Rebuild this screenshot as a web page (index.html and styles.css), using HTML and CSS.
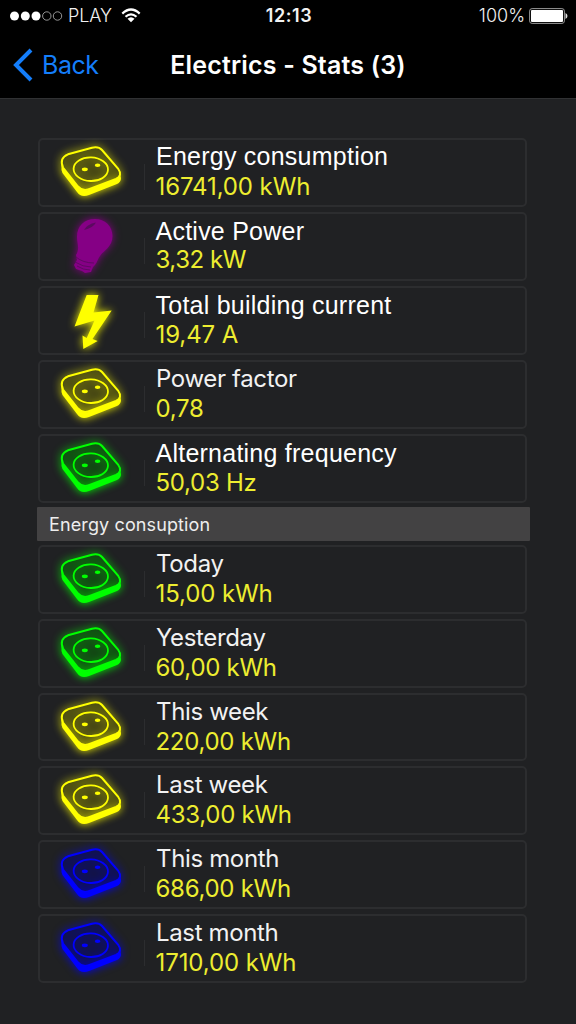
FILE: index.html
```html
<!DOCTYPE html>
<html lang="en">
<head>
<meta charset="utf-8">
<title>Electrics - Stats</title>
<link rel="stylesheet" href="styles.css">
</head>
<body>
<svg class="defs" width="0" height="0">
  <symbol id="socket" viewBox="0 0 100 69">
    <path class="side" d="M21.5 24L21.5 31Q22 34 24 36L37 53Q41 59 49 56L77 45Q81 43 81 39L80 35Q79 39 76 40L51 50Q43 54 38 48L23 29Z"/>
    <path class="face" d="M28 15.3L52 8.8Q58.500 7.300 62 11L78 29.500Q83 36.500 76 40L51 49.500Q43 53.500 38 47.500L23 28.500Q19 19 28 15.300Z"/>
    <ellipse class="line" cx="50.800" cy="30.200" rx="17.200" ry="11.800" transform="rotate(2 50.800 30)"/>
    <ellipse class="eye" cx="44.800" cy="30.300" rx="3" ry="1.900"/>
    <ellipse class="eye" cx="57.600" cy="26.300" rx="2.800" ry="1.800"/>
  </symbol>
  <symbol id="bulb" viewBox="0 1 100 69">
    <path class="solid" d="M55 7C65 7 72.500 14 72.500 24C72.500 35 64 38 60 44C57 48 57 52 53 55L51 60L45 61L42 59L36 57L34 53L37 48L36 43C40 37 37 31 37 25C37 14 44 7 55 7Z"/>
    <path class="dent" d="M44 18Q47 12 56 10.500Q53 16 44 18Z"/>
    <path class="thread" d="M36 45Q43 51 54 51M35 50Q43 55 51 55M37 54Q43 58 50 58"/>
  </symbol>
  <symbol id="bolt" viewBox="0 1 100 69">
    <path class="solid" d="M46.700 9H58.500L53.500 26.500L71.700 24.500L52.500 53L57.700 55L43.300 63L42.500 49.500L46.700 52L54.500 34.500L34.500 40.500Z"/>
  </symbol>
</svg>
<header class="top">
  <div class="status">
    <div class="carrier">
      <svg width="53" height="12" viewBox="0 0 53 12"><g fill="#fff"><circle cx="4.500" cy="6" r="4.500"/><circle cx="15.300" cy="6" r="4.500"/><circle cx="26" cy="6" r="4.500"/></g><g fill="none" stroke="#bbb" stroke-width=".8"><circle cx="36.800" cy="6" r="4.200"/><circle cx="47.500" cy="6" r="4.200"/></g></svg>
      <span class="operator">PLAY</span>
      <svg class="wifi" width="20" height="15" viewBox="0 0 20 15" fill="none" stroke="#fff" stroke-width="2.200"><path d="M1.300 5.600Q10-2.600 18.700 5.600M4.500 8.800Q10 3.800 15.500 8.800"/><path fill="#fff" stroke="none" d="M6.500 10.800Q10 7.800 13.500 10.800L10 14.300Z"/></svg>
    </div>
    <span class="clock">12:13</span>
    <div class="power"><span class="percent">100%</span>
      <svg width="39" height="16" viewBox="0 0 39 16"><rect x=".6" y=".6" width="34.800" height="14.800" rx="2.500" fill="none" stroke="#999"/><rect x="2" y="2" width="32" height="12" rx="1" fill="#fff"/><path d="M36.500 5Q38.500 6 38.500 8T36.500 11Z" fill="#ddd"/></svg>
    </div>
  </div>
  <nav class="nav">
    <a class="back"><svg width="20" height="34" viewBox="0 0 20 34"><path d="M18 2L3 17L18 32" fill="none" stroke="#147efb" stroke-width="4"/></svg><span class="back-label">Back</span></a>
    <h1 class="title">Electrics - Stats (3)</h1>
  </nav>
</header>
<main class="list">
  <section class="group">
    <article class="card"><svg class="icon yellow"><use href="#socket"/></svg><div class="info"><span class="name plain">Energy consumption</span><span class="value wide">16741,00 kWh</span></div></article>
    <article class="card"><svg class="icon purple"><use href="#bulb"/></svg><div class="info"><span class="name plain low">Active Power</span><span class="value raised">3,32 kW</span></div></article>
    <article class="card"><svg class="icon yellow"><use href="#bolt"/></svg><div class="info"><span class="name plain low">Total building current</span><span class="value wide">19,47 A</span></div></article>
    <article class="card"><svg class="icon yellow"><use href="#socket"/></svg><div class="info"><span class="name">Power factor</span><span class="value">0,78</span></div></article>
    <article class="card"><svg class="icon green"><use href="#socket"/></svg><div class="info"><span class="name plain low">Alternating frequency</span><span class="value">50,03 Hz</span></div></article>
  </section>
  <h2 class="heading">Energy consuption</h2>
  <section class="group energy">
    <article class="card"><svg class="icon green"><use href="#socket"/></svg><div class="info"><span class="name">Today</span><span class="value wide">15,00 kWh</span></div></article>
    <article class="card"><svg class="icon green"><use href="#socket"/></svg><div class="info"><span class="name">Yesterday</span><span class="value">60,00 kWh</span></div></article>
    <article class="card"><svg class="icon yellow"><use href="#socket"/></svg><div class="info"><span class="name">This week</span><span class="value">220,00 kWh</span></div></article>
    <article class="card"><svg class="icon yellow"><use href="#socket"/></svg><div class="info"><span class="name">Last week</span><span class="value">433,00 kWh</span></div></article>
    <article class="card"><svg class="icon blue"><use href="#socket"/></svg><div class="info"><span class="name">This month</span><span class="value">686,00 kWh</span></div></article>
    <article class="card"><svg class="icon blue"><use href="#socket"/></svg><div class="info"><span class="name">Last month</span><span class="value wide">1710,00 kWh</span></div></article>
  </section>
</main>
</body>
</html>
```
FILE: styles.css
```css
* { box-sizing: border-box; }
body { margin: 0; height: 1024px; background: #202123; color: #f2f2f2; font-family: Inter, "Liberation Sans", sans-serif; overflow: hidden; }
.defs { display: block; position: absolute; }
.top { height: 99px; background: #000; border-bottom: 1px solid #303133; }
.status { height: 32px; display: grid; grid-template-columns: 1fr auto 1fr; align-items: center; padding: 0 8px 0 10px; font-size: 18px; line-height: 32px; }
.carrier, .power { display: flex; align-items: center; }
.operator { margin-left: 5px; font-weight: 300; letter-spacing: -.1px; }
.wifi { margin: -2px 0 0 9px; }
.clock { font-weight: 600; font-size: 18px; letter-spacing: .6px; }
.power { justify-content: flex-end; gap: 4px; }
.percent { font-weight: 300; }
.nav { height: 66px; display: grid; grid-template-columns: 1fr auto 1fr; align-items: center; padding: 0 13px; }
.back { display: flex; align-items: center; gap: 9px; color: #147efb; font-size: 25px; font-weight: 400; letter-spacing: -.45px; }
.title { margin: 0; font-size: 25px; font-weight: 600; color: #fff; letter-spacing: .17px; }
.list { padding: 39px 48px 0 38px; }
.group { display: grid; grid-auto-rows: 69px; gap: 5px; }
.energy { grid-auto-rows: 68.8px; }
.card { width: 489px; border: 2px solid #2c2d2f; border-radius: 5px; display: flex; background: #202123; }
.icon { width: 100px; height: 69px; margin: -1px 0 0; flex: none; overflow: visible; filter: drop-shadow(0 0 4.5px currentColor); }
.info { margin-top: 2px; padding-left: 16px; display: flex; flex-direction: column; background: linear-gradient(#2c2d2f, #2c2d2f) 4px 22px / 1px 26px no-repeat; }
.name { height: 30px; font-size: 24px; line-height: 29px; letter-spacing: -.35px; }
.plain { font-family: "Liberation Sans", Arial, sans-serif; font-size: 25px; line-height: 28px; color: #fff; letter-spacing: .24px; }
.low { padding-top: 1px; margin-left: -.5px; }
.value { margin-left: -.5px; font-size: 24px; line-height: 30px; color: #eded30; letter-spacing: -.28px; }
.wide { letter-spacing: -.1px; }
.raised { margin-top: -1px; letter-spacing: -.45px; }
.heading { width: 493px; height: 34px; margin: 4px 0 4px -1px; padding-left: 12px; background: #434243; color: #eee; font-size: 18px; line-height: 35px; font-weight: 400; letter-spacing: .12px; border-radius: 1px; }
.yellow { color: #ff0; }
.green { color: #0f0; }
.blue { color: #00f; }
.purple { color: #850085; }
.side { fill: currentColor; }
.face { fill: #00000038; stroke: currentColor; stroke-width: 2; }
.line { fill: none; stroke: currentColor; stroke-width: 1.8; }
.eye, .solid { fill: currentColor; }
.blue .face { fill: #1c1a4c; stroke: #0b08d8; }
.blue .line { stroke: #0b08d8; }
.dent { fill: #5b0960; }
.thread { fill: none; stroke: #5b0960; stroke-width: .9; }
```
